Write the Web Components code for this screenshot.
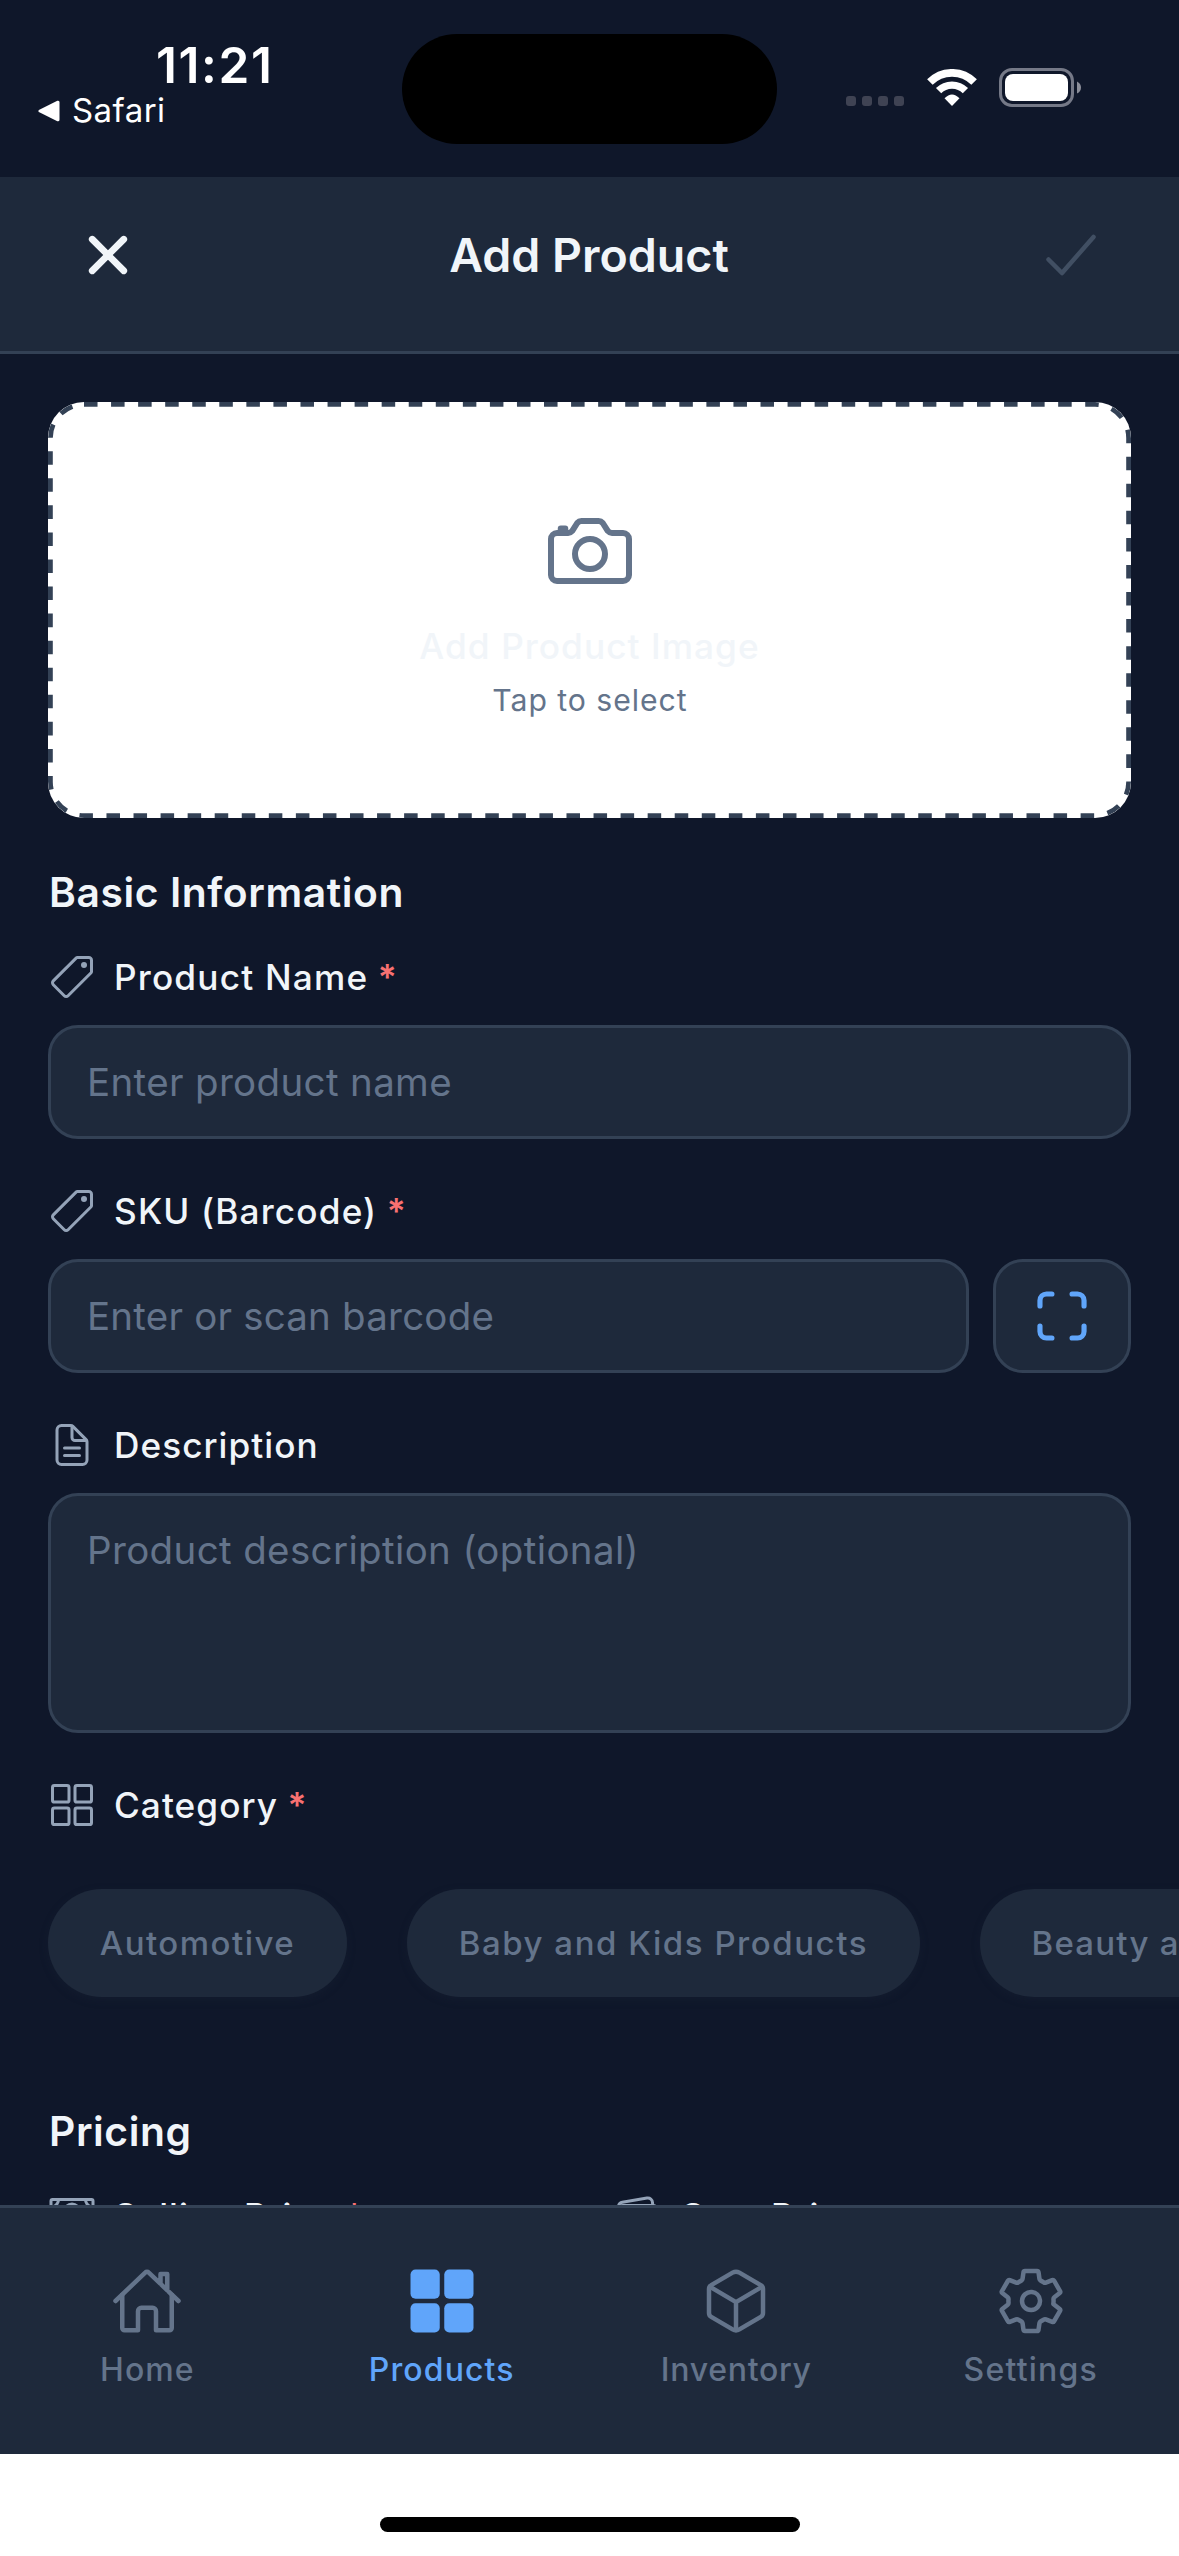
<!DOCTYPE html>
<html lang="en">
<head>
<meta charset="utf-8">
<title>Add Product</title>
<style>
html,body{margin:0;padding:0;background:#fff}
body{width:1179px;height:2556px;overflow:hidden;font-family:Inter,"Liberation Sans",sans-serif}
</style>
</head>
<body>
<add-product-app></add-product-app>
<script>
const define = (name, render) => customElements.define(name, class extends HTMLElement {
  connectedCallback() {
    if (this.shadowRoot) return;
    this.attachShadow({ mode: 'open' }).innerHTML = render(this);
  }
});

const ICONS = {
  close: '<path fill="currentColor" stroke="none" d="M289.94 256l95-95A24 24 0 00351 127l-95 95-95-95a24 24 0 00-34 34l95 95-95 95a24 24 0 1034 34l95-95 95 95a24 24 0 0034-34z"/>',
  check: '<path d="M416 128L192 384l-96-96"/>',
  camera: '<path d="M350.54 148.68l-26.62-42.06C318.31 100.08 310.62 96 302 96h-92c-8.62 0-16.31 4.08-21.92 10.62l-26.62 42.06C155.85 155.23 148.62 160 140 160H80a32 32 0 00-32 32v192a32 32 0 0032 32h352a32 32 0 0032-32V192a32 32 0 00-32-32h-59c-8.65 0-16.85-4.77-22.46-11.32z"/><circle cx="256" cy="272" r="80" stroke-miterlimit="10"/><path d="M124 158v-22h-24v22"/>',
  tag: '<path d="M435.25 48h-122.9a14.46 14.46 0 00-10.2 4.2L56.45 297.9a28.85 28.85 0 000 40.7l117 117a28.85 28.85 0 0040.7 0L459.75 210a14.46 14.46 0 004.2-10.2v-123a28.66 28.66 0 00-28.7-28.8z"/><path fill="currentColor" stroke="none" d="M384 160a32 32 0 1132-32 32 32 0 01-32 32z"/>',
  document: '<path d="M416 221.25V416a48 48 0 01-48 48H144a48 48 0 01-48-48V96a48 48 0 0148-48h98.75a32 32 0 0122.62 9.37l141.26 141.26a32 32 0 019.37 22.62z"/><path d="M256 56v120a32 32 0 0032 32h120M176 288h160M176 368h160"/>',
  grid: '<rect x="48" y="48" width="176" height="176" rx="20"/><rect x="288" y="48" width="176" height="176" rx="20"/><rect x="48" y="288" width="176" height="176" rx="20"/><rect x="288" y="288" width="176" height="176" rx="20"/>',
  gridFilled: '<g fill="currentColor" stroke="none"><rect x="32" y="32" width="208" height="208" rx="36"/><rect x="272" y="32" width="208" height="208" rx="36"/><rect x="32" y="272" width="208" height="208" rx="36"/><rect x="272" y="272" width="208" height="208" rx="36"/></g>',
  scan: '<path stroke-width="44" d="M342 444h46a56 56 0 0056-56v-46M444 170v-46a56 56 0 00-56-56h-46M170 444h-46a56 56 0 01-56-56v-46M68 170v-46a56 56 0 0156-56h46"/>',
  cash: '<rect width="448" height="256" x="32" y="80" rx="16"/><path d="M64 384h384M96 432h320"/><circle cx="256" cy="208" r="80"/><path d="M480 160a80 80 0 01-80-80M32 160a80 80 0 0080-80M480 256a80 80 0 00-80 80M32 256a80 80 0 0180 80"/>',
  wallet: '<rect width="416" height="288" x="48" y="144" rx="48"/><path d="M411.36 144v-30A50 50 0 00352 64.9L88.64 109.85A50 50 0 0048 159v49"/><path fill="currentColor" stroke="none" d="M368 320a32 32 0 1132-32 32 32 0 01-32 32z"/>',
  home: '<path d="M80 212v236a16 16 0 0016 16h96V328a24 24 0 0124-24h80a24 24 0 0124 24v136h96a16 16 0 0016-16V212"/><path d="M480 256L266.89 52c-5-5.28-16.69-5.34-21.78 0L32 256M400 179V64h-48v69"/>',
  cube: '<path d="M448 341.37V170.61A32 32 0 00432.11 143l-152-88.46a47.94 47.94 0 00-48.24 0L79.89 143A32 32 0 0064 170.61v170.76A32 32 0 0079.89 369l152 88.46a48 48 0 0048.24 0l152-88.46A32 32 0 00448 341.37z"/><path d="M69 153.99l187 110 187-110M256 463.99v-200"/>',
  settings: '<path d="M262.29 192.31a64 64 0 1057.4 57.4 64.13 64.13 0 00-57.4-57.4zM416.39 256a154.34 154.34 0 01-1.53 20.79l45.21 35.46a10.81 10.81 0 012.45 13.75l-42.77 74a10.81 10.81 0 01-13.14 4.59l-44.9-18.08a16.11 16.11 0 00-15.17 1.75A164.48 164.48 0 01325 400.8a15.94 15.94 0 00-8.82 12.14l-6.73 47.89a11.08 11.08 0 01-10.68 9.17h-85.54a11.11 11.11 0 01-10.69-8.87l-6.72-47.82a16.07 16.07 0 00-9-12.22 155.3 155.3 0 01-21.46-12.57 16 16 0 00-15.11-1.71l-44.89 18.07a10.81 10.81 0 01-13.14-4.58l-42.77-74a10.8 10.8 0 012.45-13.75l38.21-30a16.05 16.05 0 006-14.08c-.36-4.17-.58-8.33-.58-12.5s.21-8.27.58-12.35a16 16 0 00-6.07-13.94l-38.19-30A10.81 10.81 0 0149.48 186l42.77-74a10.81 10.81 0 0113.14-4.59l44.9 18.08a16.11 16.11 0 0015.17-1.75A164.48 164.48 0 01187 111.2a15.94 15.94 0 008.82-12.14l6.73-47.89A11.08 11.08 0 01213.23 42h85.54a11.11 11.11 0 0110.69 8.87l6.72 47.82a16.07 16.07 0 009 12.22 155.3 155.3 0 0121.46 12.57 16 16 0 0015.11 1.71l44.89-18.07a10.81 10.81 0 0113.14 4.58l42.77 74a10.8 10.8 0 01-2.45 13.75l-38.21 30a16.05 16.05 0 00-6.05 14.08c.33 4.14.55 8.3.55 12.47z"/>'
};

define('app-icon', el => {
  const size = el.getAttribute('size') || 48;
  return `<style>:host{display:block;flex:none;width:${size}px;height:${size}px}svg{display:block;width:100%;height:100%}</style>
  <svg viewBox="0 0 512 512" fill="none" stroke="currentColor" stroke-width="32" stroke-linecap="round" stroke-linejoin="round">${ICONS[el.getAttribute('name')]}</svg>`;
});

define('status-bar', () => `
<style>
:host{display:grid;grid-template-columns:402px 375px 402px;height:177px;background:#0f172a;color:#fff}
.left{padding-top:40px}
.time{padding-left:156px;font-size:49.5px;line-height:50px;font-weight:600;letter-spacing:1.6px}
.back{display:flex;align-items:center;padding-left:38px;height:41px;font-size:33px;line-height:41px;letter-spacing:.45px;gap:12px}
.back svg{display:block;width:22px;height:22px}
.island{margin-top:34px;height:110px;border-radius:55px;background:#000}
.right{display:flex;align-items:flex-end;height:107px;padding-left:69px}
.dots{display:flex;gap:6px;margin:0 22.8px 1px 0}
.dots i{width:10px;height:10px;border-radius:3px;background:#3f4353}
.wifi{display:block;width:50px;height:37px;margin:0 22.2px 1px 0}
.battery{display:block;width:82px;height:39px}
</style>
<div class="left">
  <div class="time">11:21</div>
  <div class="back"><svg viewBox="0 0 22 22"><path d="M2 11L20 2.200V19.800Z" fill="#fff" stroke="#fff" stroke-width="3" stroke-linejoin="round"/></svg><span>Safari</span></div>
</div>
<div class="island"></div>
<div class="right">
  <div class="dots"><i></i><i></i><i></i><i></i></div>
  <svg class="wifi" viewBox="0 0 50 37"><g fill="none" stroke="#fff"><path stroke-width="7.800" d="M2.900 13.100A31.100 31.100 0 0 1 47.100 13.100"/><path stroke-width="7.400" d="M11.600 21.700A18.800 18.800 0 0 1 38.400 21.700"/></g><path fill="#fff" d="M25 37L17.500 29.300Q25 21.500 32.500 29.300Z"/></svg>
  <svg class="battery" viewBox="0 0 82 39"><rect x="1.500" y="1.500" width="72" height="36" rx="11.500" fill="none" stroke="#757987" stroke-width="3"/><rect x="6" y="6" width="63" height="27" rx="8" fill="#fff"/><path fill="#8b8e99" d="M78 13.500Q82 15.500 82 19.500T78 25.500Z"/></svg>
</div>`);

define('app-header', () => `
<style>
:host{display:flex;align-items:center;justify-content:space-between;box-sizing:border-box;height:177px;padding:42px 72px 60px;background:#1e293b;border-bottom:3px solid #334155;color:#f1f5f9}
h1{margin:0;padding-right:1px;font-size:46.5px;line-height:60px;font-weight:590}
.done{color:#414f63}
</style>
<app-icon name="close" size="72"></app-icon>
<h1><slot></slot></h1>
<app-icon class="done" name="check" size="72"></app-icon>`);

define('image-picker', () => `
<style>
:host{display:grid;height:416px;border-radius:36px;background:#fff;overflow:hidden}
.frame,.body{grid-area:1/1}
.frame{display:block;width:1083px;height:416px}
.body{display:flex;flex-direction:column;align-items:center;padding-top:101px;color:#64748b}
.title{margin-top:20px;font-size:35.2px;line-height:54px;font-weight:500;letter-spacing:1.07px;color:#f1f5f9}
.hint{padding-left:1px;font-size:30.2px;line-height:54px;letter-spacing:.95px}
</style>
<svg class="frame" viewBox="0 0 1083 416"><path fill="none" stroke="#334155" stroke-width="4.800" stroke-dasharray="13.530 13.530" d="M36 2.400H1047A33.600 33.600 0 0 1 1080.600 36V380A33.600 33.600 0 0 1 1047 413.600H36A33.600 33.600 0 0 1 2.400 380V36A33.600 33.600 0 0 1 36 2.400Z"/></svg>
<div class="body"><app-icon name="camera" size="96"></app-icon><div class="title">Add Product Image</div><div class="hint">Tap to select</div></div>`);

define('section-title', () => `
<style>:host{display:block;padding-left:1px;font-size:40.8px;line-height:50px;font-weight:590;letter-spacing:.58px;color:#f1f5f9;margin-bottom:36px}</style><slot></slot>`);

define('field-label', el => `
<style>
:host{display:flex;align-items:center;height:48px;color:#f1f5f9;font-size:35.2px;line-height:48px;font-weight:500;white-space:nowrap;letter-spacing:${el.getAttribute('track') || 1}px}
app-icon{color:#94a3b8;margin-right:18px}
.req{color:#f87171;margin-left:9.5px;font-weight:600}
</style>
<app-icon name="${el.getAttribute('icon')}"></app-icon><span><slot></slot></span>${el.hasAttribute('required') ? '<span class="req">*</span>' : ''}`);

define('text-field', el => `
<style>
:host{display:block;flex:1;box-sizing:border-box;height:${el.getAttribute('rows') ? 240 : 114}px;padding:27px 36px;border:3px solid #334155;border-radius:30px;background:#1e293b;color:#64748b;font-size:38.5px;line-height:54px;letter-spacing:${el.getAttribute('track') || .3}px;white-space:nowrap}
</style><slot></slot>`);

define('scan-button', () => `
<style>:host{display:flex;align-items:center;justify-content:center;box-sizing:border-box;width:138px;height:114px;border:3px solid #334155;border-radius:30px;background:#1e293b;color:#60a5fa}</style>
<app-icon name="scan" size="60"></app-icon>`);

define('category-chip', el => `
<style>:host{display:block;flex:none;height:108px;padding:0 51.8px;border-radius:54px;background:#1e293b;box-shadow:0 3px 9px rgba(30,41,59,.28);color:#64748b;font-size:33px;line-height:108px;font-weight:500;letter-spacing:${el.getAttribute('track') || 1.5}px;white-space:nowrap}</style><slot></slot>`);

define('product-form', () => `
<style>
:host{display:block;box-sizing:border-box;height:1851px;padding:48px 48px 0;overflow:hidden;background:#0f172a}
image-picker{margin-bottom:49px}
.field{display:flex;flex-direction:column;gap:24px;margin-bottom:48px}
.row{display:flex;gap:24px}
.chips{display:flex;gap:60px;margin:60px 0 109px}
.cols{display:grid;grid-template-columns:1fr 1fr;gap:48px}
.field text-field{flex:none}
.row text-field{flex:1}
</style>
<image-picker></image-picker>
<section-title>Basic Information</section-title>
<div class="field"><field-label icon="tag" track="1.2" required>Product Name</field-label><text-field track=".35">Enter product name</text-field></div>
<div class="field"><field-label icon="tag" track="1.16" required>SKU (Barcode)</field-label><div class="row"><text-field track=".21">Enter or scan barcode</text-field><scan-button></scan-button></div></div>
<div class="field"><field-label icon="document" track="1.04">Description</field-label><text-field rows="3" track=".36">Product description (optional)</text-field></div>
<field-label icon="grid" track="1.05" required>Category</field-label>
<div class="chips"><category-chip track="1.47">Automotive</category-chip><category-chip track="1.54">Baby and Kids Products</category-chip><category-chip track="1.2">Beauty and Personal Care</category-chip></div>
<section-title>Pricing</section-title>
<div class="cols"><field-label icon="cash" track=".95" required>Selling Price</field-label><field-label icon="wallet" track=".85">Cost Price</field-label></div>`);

define('tab-item', el => `
<style>
:host{display:flex;flex:1;flex-direction:column;align-items:center;padding-top:57px;color:${el.hasAttribute('active') ? '#60a5fa' : '#64748b'};font-size:32px;line-height:40px;font-weight:500;letter-spacing:${el.getAttribute('track')}px}
span{margin-top:12.5px}
</style>
<app-icon name="${el.getAttribute('icon')}" size="72"></app-icon><span><slot></slot></span>`);

define('tab-bar', () => `
<style>:host{display:flex;box-sizing:border-box;height:249px;padding-right:1px;background:#1e293b;border-top:3px solid #334155}tab-item,::slotted(*){flex:1 1 0;min-width:0}</style><slot></slot>`);

define('home-indicator', () => `
<style>:host{display:flex;justify-content:center;box-sizing:border-box;height:102px;padding-top:63px;background:#fff}div{width:420px;height:15px;border-radius:7.5px;background:#000}</style><div></div>`);

define('add-product-app', () => `
<style>:host{display:flex;flex-direction:column;width:1179px;height:2556px;overflow:hidden}</style>
<status-bar></status-bar>
<app-header>Add Product</app-header>
<product-form></product-form>
<tab-bar>
  <tab-item icon="home" track="1">Home</tab-item>
  <tab-item icon="gridFilled" track="1.1" active>Products</tab-item>
  <tab-item icon="cube" track=".7">Inventory</tab-item>
  <tab-item icon="settings" track="1.2">Settings</tab-item>
</tab-bar>
<home-indicator></home-indicator>`);
</script>
</body>
</html>
